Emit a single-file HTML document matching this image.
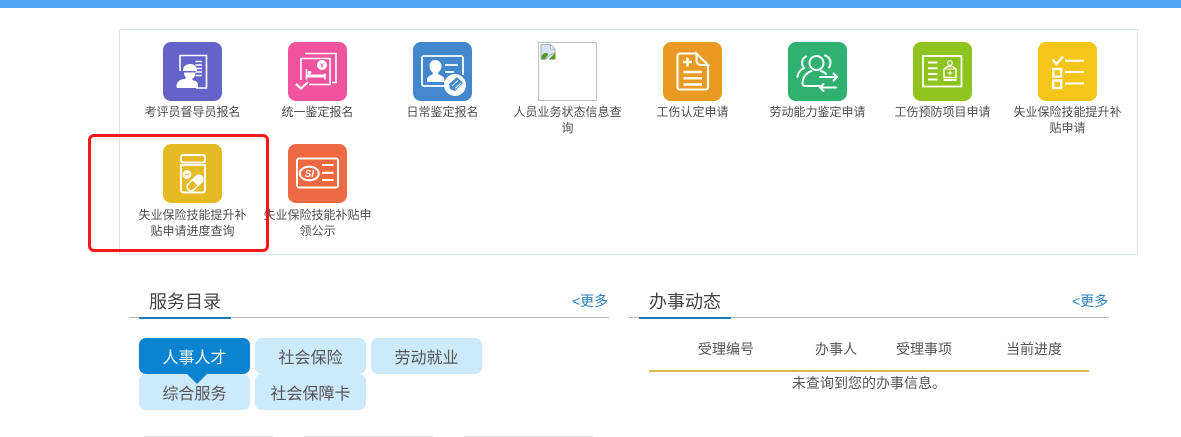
<!DOCTYPE html>
<html lang="zh-CN">
<head>
<meta charset="utf-8">
<title>服务</title>
<style>
html,body{margin:0;padding:0;background:#fff;}
body{position:relative;width:1181px;height:437px;overflow:hidden;font-family:"Liberation Sans","Noto Sans CJK SC",sans-serif;color:#444;}
.abs{position:absolute;}
.top{left:0;top:0;width:1181px;height:8px;background:#52a5f0;}
.panel{left:119px;top:29px;width:1017px;height:224px;border:1px solid #d6e4ef;}
.ic{position:absolute;width:59px;height:59px;border-radius:8px;}
.ic svg{display:block;width:59px;height:59px;}
.lb{position:absolute;width:125px;text-align:center;font-size:12px;line-height:16px;color:#4f4f4f;white-space:nowrap;}
.broken{position:absolute;left:538px;top:42px;width:57px;height:57px;border:1px solid #c0c0c0;}
.red{left:88px;top:134px;width:175px;height:112px;border:3px solid #f5191a;border-radius:6px;}
.title{font-size:18px;line-height:24px;color:#444;}
.more{font-size:14px;line-height:18px;color:#2a80bf;white-space:nowrap;}
.ln{height:1px;background:#b9b9b9;width:480px;}
.ul{height:2px;width:92px;background:#1a7db5;}
.tab{position:absolute;width:111px;height:36px;line-height:41px;text-align:center;font-size:16px;border-radius:7px;background:#cde9fc;color:#555;}
.tab.on{background:#0a83d0;color:#fff;}
.th{position:absolute;top:340px;font-size:14px;line-height:18px;color:#555;white-space:nowrap;}
</style>
</head>
<body>
<div class="abs top"></div>
<div class="abs panel"></div>

<!-- 1 -->
<div class="ic" style="left:163px;top:42px;background:#6563c8;">
<svg viewBox="0 0 59 59" fill="none" stroke="#fff" stroke-width="1.600">
<path d="M17 29V13.500H43.500V46H33"/>
<path d="M32.500 19.500h6.500M32.500 23h6.500M32.500 26.500h6.500M32.500 30h6.500M32.500 33.500h6.500" stroke-width="1.600"/>
<path fill="#fff" stroke="none" d="M20 28c0-3.500 3-6 7-6s6 2 7 5v2h-14z"/>
<path fill="#fff" stroke="none" d="M21 30.500h11.500c0 3-1.500 5.500-3.500 6.500l1 1.500c3 0 5 2 5 4v3.500H15c-1 0-1.500-.5-1.500-2 0-4 3.500-7 8.500-7l1-1.500c-1.500-1.500-2-3-2-5z"/>
</svg></div>
<div class="lb" style="left:130px;top:104px;">考评员督导员报名</div>

<!-- 2 -->
<div class="ic" style="left:288px;top:42px;background:#f2539e;">
<svg viewBox="0 0 59 59" fill="none" stroke="#fff" stroke-width="1.600">
<path d="M17 11.500H48V40.500H44"/>
<path d="M13 38V16.500H42V42.500H21"/>
<path d="M8 42l5 4.500 7-6.500" stroke-width="2.200"/>
<circle cx="34" cy="23" r="5" fill="#fff" stroke="none"/>
<path d="M32.500 21.500l1.500 1.500 1.500-1.500M34 23v2.500M32.500 24h3" stroke="#f2539e" stroke-width=".8"/>
<path d="M18.500 27v10.500M37 37.500V31.500" stroke-width="1.600"/>
<path d="M18.500 32.500h18.500v3H18.500z" fill="#fff" stroke="none"/>
<circle cx="21.500" cy="30.500" r="1.800" fill="#fff" stroke="none"/>
</svg></div>
<div class="lb" style="left:255px;top:104px;">统一鉴定报名</div>

<!-- 3 -->
<div class="ic" style="left:413px;top:42px;background:#4388cc;">
<svg viewBox="0 0 59 59" fill="none" stroke="#fff" stroke-width="1.800">
<path d="M32 44H11c-1 0-2-1-2-2V16c0-1 1-2 2-2h37c1 0 2 1 2 2v17"/>
<path fill="#fff" stroke="none" d="M22 18c4 0 6.500 3 6.500 6 0 3-1.500 5-3.500 7 0 1 1 2 3 2.500 2 1 3.500 2 3.500 4.500v2H14v-2c0-2.500 1.500-3.500 3-4.500 2-.5 3-1.500 3-2.500-2-2-3.500-4-3.500-7 0-3 2-6 5.500-6z"/>
<path d="M32 23h13M32 30h9" stroke-width="1.800"/>
<circle cx="42" cy="43" r="11" fill="#fff" stroke="none"/>
<path d="M36 42l8-7 6 6-8 8-5-2z" fill="#4388cc" stroke="none"/>
<path d="M39 44l6-5.500M42 46.500l6-5.500" stroke="#fff" stroke-width="1"/>
</svg></div>
<div class="lb" style="left:380px;top:104px;">日常鉴定报名</div>

<!-- 4 broken image -->
<div class="broken">
<svg width="16" height="16" viewBox="0 0 16 16" style="position:absolute;left:1px;top:1px">
<path d="M1 .5h9.500l4.500 4.500v4l-5 2-4.500 4.500H1z" fill="#d7e3f5" stroke="#a3adb8" stroke-width="1"/>
<path d="M10.500 .5v4.500H15z" fill="#fff" stroke="#a3adb8" stroke-width=".8"/>
<path d="M1.500 12c2-3.500 4.500-4 7-2l-3.500 5H1.500z" fill="#56992f"/>
<path d="M8.500 15.500l7-7v7z" fill="#56992f"/>
</svg>
</div>
<div class="lb" style="left:505px;top:104px;">人员业务状态信息查<br>询</div>

<!-- 5 -->
<div class="ic" style="left:663px;top:42px;background:#e89a22;">
<svg viewBox="0 0 59 59" fill="none" stroke="#fff" stroke-width="2.100">
<path d="M33.500 11.500H17c-1.500 0-2.500 1-2.500 2.500v31c0 1.500 1 2.500 2.500 2.500h25.500c1.500 0 2.500-1 2.500-2.500V23"/>
<path d="M33.500 11.500V18c0 3 2 5 5 5H45z"/>
<path d="M20 20h9M24.500 15.500v9" stroke-width="2.400"/>
<path d="M20.500 30h18.500M20.500 36.300h18.500M20.500 42.500h18.500" stroke-width="2.400"/>
</svg></div>
<div class="lb" style="left:630px;top:104px;">工伤认定申请</div>

<!-- 6 -->
<div class="ic" style="left:788px;top:42px;background:#30b16f;">
<svg viewBox="0 0 59 59" fill="none" stroke="#fff" stroke-width="2" stroke-linecap="round">
<circle cx="28.500" cy="21" r="7"/>
<path d="M37 13.500c3.500 1 5.500 4 5.500 7 0 2-.5 3.500-1.500 5"/>
<path d="M18 14.500c-3 1.500-4 4-4 6.500 0 2 1 3.500 2 5-3 1.500-6 4.500-6.500 9"/>
<path d="M32 44H17c-1.500 0-2.500-1-2.500-2.500 0-6 4-11 9-12.500M33 29c2 .5 3.500 1.500 5 3"/>
<path d="M32 35h17M45.500 31.500l3.500 3.500-3.500 3.500"/>
<path d="M48 45.500H32M35.500 42l-3.500 3.500 3.500 3.500"/>
</svg></div>
<div class="lb" style="left:755px;top:104px;">劳动能力鉴定申请</div>

<!-- 7 -->
<div class="ic" style="left:913px;top:42px;background:#8fc31f;">
<svg viewBox="0 0 59 59" fill="none" stroke="#fff" stroke-width="1.800">
<rect x="10" y="14" width="38.500" height="30.500"/>
<path d="M15 20.500h9.500M15 26.300h9.500M15 32h9.500M15 37.500h9.500" stroke-width="2"/>
<circle cx="37" cy="21" r="2.300" stroke-width="1.200"/>
<path d="M31 27l3.500-2.500h5L43 27v8.500H31z" stroke-width="1.400"/>
<path d="M31 27h12" stroke-width="1"/>
<path d="M34.500 31h5M37 28.700v4.600" stroke-width="1.100"/>
<path d="M30.500 38h13" stroke-width="2"/>
</svg></div>
<div class="lb" style="left:880px;top:104px;">工伤预防项目申请</div>

<!-- 8 -->
<div class="ic" style="left:1038px;top:42px;background:#f5c518;">
<svg viewBox="0 0 59 59" fill="none" stroke="#fff" stroke-width="2">
<path d="M14.500 17.500l4 4.500 6.500-7.500" stroke-width="2.300"/>
<path d="M27 18.800h19M27 30h19M27 41.500h19"/>
<rect x="15.200" y="27" width="8" height="7.500" stroke-width="2.300"/>
<rect x="15.200" y="38.500" width="8" height="7.500" stroke-width="2.300"/>
</svg></div>
<div class="lb" style="left:1005px;top:104px;">失业保险技能提升补<br>贴申请</div>

<!-- 9 -->
<div class="ic" style="left:163px;top:144px;background:#e5ba22;">
<svg viewBox="0 0 59 59" fill="none" stroke="#fff" stroke-width="1.900">
<rect x="18" y="11" width="24" height="7.500" rx="2"/>
<path d="M18 21h24v25c0 1.500-1 2.500-2.500 2.500h-19c-1.500 0-2.500-1-2.500-2.500z"/>
<circle cx="24" cy="30.500" r="4.400" fill="#fff" stroke="none"/>
<path d="M21.500 31l5-1.300" stroke="#e5ba22" stroke-width="1.100"/>
<g transform="rotate(-45 32 39)">
<rect x="22.500" y="35" width="19" height="8" rx="4" stroke-width="1.600"/>
<path d="M32 35h5.500a4 4 0 0 1 0 8H32z" fill="#fff" stroke="none"/>
</g>
</svg></div>
<div class="lb" style="left:130px;top:207px;">失业保险技能提升补<br>贴申请进度查询</div>

<!-- 10 -->
<div class="ic" style="left:288px;top:144px;background:#ee6841;">
<svg viewBox="0 0 59 59" fill="none" stroke="#fff" stroke-width="1.900">
<rect x="9" y="14.500" width="41" height="29" rx="2"/>
<ellipse cx="21.300" cy="29.500" rx="9.500" ry="6.800" stroke-width="2.100"/>
<text x="21.300" y="33" text-anchor="middle" font-family="'Liberation Sans',sans-serif" font-size="10" font-weight="700" font-style="italic" fill="#fff" stroke="none">SI</text>
<path d="M34 21h11.500M34 28.800h11.500M34 36h11.500" stroke-width="2.100"/>
</svg></div>
<div class="lb" style="left:255px;top:207px;">失业保险技能补贴申<br>领公示</div>

<div class="abs red"></div>

<!-- left section -->
<div class="abs title" style="left:149px;top:290px;">服务目录</div>
<div class="abs more" style="left:572px;top:292px;">&lt;更多</div>
<div class="abs ln" style="left:129px;top:317px;"></div>
<div class="abs ul" style="left:139px;top:317px;"></div>

<div class="tab on" style="left:139px;top:338px;">人事人才</div>
<div class="tab" style="left:255px;top:338px;">社会保险</div>
<div class="tab" style="left:371px;top:338px;">劳动就业</div>
<div class="tab" style="left:139px;top:374px;">综合服务</div>
<div class="tab" style="left:255px;top:374px;">社会保障卡</div>
<div class="abs" style="left:187px;top:374px;width:0;height:0;border-left:10px solid transparent;border-right:10px solid transparent;border-top:10px solid #0a83d0;"></div>

<!-- right section -->
<div class="abs title" style="left:649px;top:290px;">办事动态</div>
<div class="abs more" style="left:1072px;top:292px;">&lt;更多</div>
<div class="abs ln" style="left:629px;top:317px;"></div>
<div class="abs ul" style="left:639px;top:317px;"></div>

<div class="th" style="left:698px;">受理编号</div>
<div class="th" style="left:815px;">办事人</div>
<div class="th" style="left:896px;">受理事项</div>
<div class="th" style="left:1006px;">当前进度</div>
<div class="abs" style="left:649px;top:370px;width:440px;height:2px;background:#d9b94b;"></div>
<div class="abs" style="left:649px;top:374px;width:440px;text-align:center;font-size:14px;line-height:18px;color:#555;">未查询到您的办事信息。</div>

<!-- cut-off row at bottom -->
<div class="abs" style="left:144px;top:436px;width:129px;height:1px;background:#ddd;"></div>
<div class="abs" style="left:304px;top:436px;width:129px;height:1px;background:#ddd;"></div>
<div class="abs" style="left:464px;top:436px;width:129px;height:1px;background:#ddd;"></div>
</body>
</html>
